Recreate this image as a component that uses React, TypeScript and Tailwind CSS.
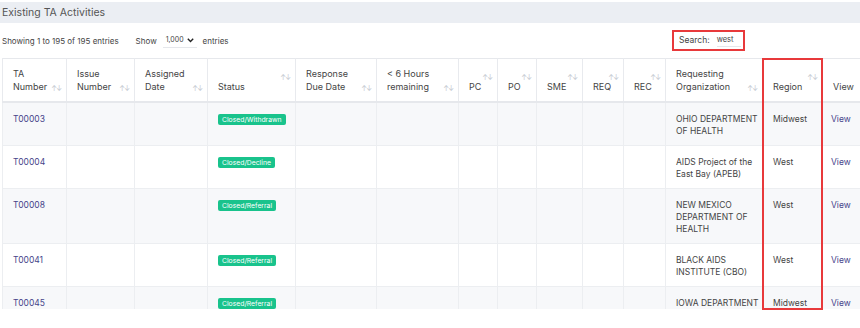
import React from 'react';

type Row = {
    id: string;
    status: string;
    org: string[];
    region: string;
    shade: boolean;
};

const rows: Row[] = [
    { id: 'T00003', status: 'Closed/Withdrawn', org: ['OHIO DEPARTMENT', 'OF HEALTH'], region: 'Midwest', shade: true },
    { id: 'T00004', status: 'Closed/Decline', org: ['AIDS Project of the', 'East Bay (APEB)'], region: 'West', shade: false },
    { id: 'T00008', status: 'Closed/Referral', org: ['NEW MEXICO', 'DEPARTMENT OF', 'HEALTH'], region: 'West', shade: true },
    { id: 'T00041', status: 'Closed/Referral', org: ['BLACK AIDS', 'INSTITUTE (CBO)'], region: 'West', shade: false },
    { id: 'T00045', status: 'Closed/Referral', org: ['IOWA DEPARTMENT'], region: 'Midwest', shade: true },
];

// widths in px, table starts at x=2
const columns: { label: string[]; width: number; sort?: 'low' | 'high' }[] = [
    { label: ['TA', 'Number'], width: 64, sort: 'low' },
    { label: ['Issue', 'Number'], width: 68, sort: 'low' },
    { label: ['Assigned', 'Date'], width: 73, sort: 'low' },
    { label: ['Status'], width: 88, sort: 'high' },
    { label: ['Response', 'Due Date'], width: 81, sort: 'low' },
    { label: ['< 6 Hours', 'remaining'], width: 82, sort: 'low' },
    { label: ['PC'], width: 39, sort: 'high' },
    { label: ['PO'], width: 39, sort: 'high' },
    { label: ['SME'], width: 46, sort: 'high' },
    { label: ['REQ'], width: 41, sort: 'high' },
    { label: ['REC'], width: 42, sort: 'high' },
    { label: ['Requesting', 'Organization'], width: 97, sort: 'low' },
    { label: ['Region'], width: 60, sort: 'high' },
    { label: ['View'], width: 60 },
];

const SortIcon: React.FC<{ pos: 'low' | 'high' }> = ({ pos }) => (
    <span
        className={`absolute right-[5px] text-[7px] leading-none tracking-[-1px] text-[#c3c7cf] ${pos === 'low' ? 'bottom-[9px]' : 'top-[15px]'}`}
    >
        ↑↓
    </span>
);

const Badge: React.FC<{ text: string }> = ({ text }) => (
    <span className="inline-block rounded-[2px] bg-[#19c38c] px-[4px] text-[6.8px] leading-[11px] text-white">
        {text}
    </span>
);

export default function App() {
    return (
        <div className="relative h-[328px] w-[860px] overflow-hidden bg-white text-[#444] [font-family:Inter,'Noto_Sans',sans-serif]">
            {/* Encabezado */}
            <div className="mt-[2px] flex h-[21px] items-center bg-[#ebeef3] px-[2px] text-[10.5px] text-[#555]">
                Existing TA Activities
            </div>

            {/* Controles */}
            <div className="flex h-[35px] items-center pl-[2px] text-[8px]">
                <span>Showing 1 to 195 of 195 entries</span>
                <span className="ml-[17px]">Show</span>
                <span className="ml-[6px] flex items-center gap-[3px] border-b border-[#e5e7eb] px-[3px] pb-[2px] pt-[2px] text-[7px]">
                    1,000
                    <svg width="7" height="5" viewBox="0 0 7 5">
                        <path d="M0.8 0.8 L3.5 3.6 L6.2 0.8" fill="none" stroke="#222" strokeWidth="1.4" />
                    </svg>
                </span>
                <span className="ml-[6px]">entries</span>

                <div className="ml-auto mr-[115px] flex h-[21px] w-[73px] items-center border-2 border-[#e8393b] pl-[5px]">
                    <span className="text-[8.5px]">Search:</span>
                    <span className="ml-[7px] border-b border-[#e5e7eb] pr-[8px] text-[7.5px]">west</span>
                </div>
            </div>

            {/* Tabla */}
            <div className="ml-[2px] h-[251px] overflow-hidden">
                <table className="w-[880px] table-fixed border-collapse text-[8.5px]">
                    <colgroup>
                        {columns.map((c, i) => (
                            <col key={i} style={{ width: c.width }} />
                        ))}
                    </colgroup>
                    <thead>
                        <tr className="h-[43px] border-b-2 border-t border-[#e6e8ec]">
                            {columns.map((c, i) => (
                                <th
                                    key={i}
                                    className="relative border-x border-[#e8eaee] pb-[8px] pl-[10px] text-left align-bottom text-[9px] font-normal leading-[13px] text-[#444]"
                                >
                                    {c.label.map((l, j) => (
                                        <div key={j}>{l}</div>
                                    ))}
                                    {c.sort && <SortIcon pos={c.sort} />}
                                </th>
                            ))}
                        </tr>
                    </thead>
                    <tbody>
                        {rows.map((r) => (
                            <tr key={r.id} className={`border-b border-[#eceef1] ${r.shade ? 'bg-[#f7f8fa]' : 'bg-white'}`}>
                                <td className="border-x border-[#eceef1] pb-[8px] pl-[10px] pt-[10px] align-top leading-[12px] text-[#46448a]">
                                    {r.id}
                                </td>
                                <td className="border-x border-[#eceef1]" />
                                <td className="border-x border-[#eceef1]" />
                                <td className="border-x border-[#eceef1] pb-[8px] pl-[10px] pt-[10px] align-top leading-[12px]">
                                    <Badge text={r.status} />
                                </td>
                                <td className="border-x border-[#eceef1]" />
                                <td className="border-x border-[#eceef1]" />
                                <td className="border-x border-[#eceef1]" />
                                <td className="border-x border-[#eceef1]" />
                                <td className="border-x border-[#eceef1]" />
                                <td className="border-x border-[#eceef1]" />
                                <td className="border-x border-[#eceef1]" />
                                <td className="border-x border-[#eceef1] pb-[8px] pl-[10px] pt-[10px] align-top leading-[12px]">
                                    {r.org.map((l, j) => (
                                        <div key={j}>{l}</div>
                                    ))}
                                </td>
                                <td className="border-x border-[#eceef1] pb-[8px] pl-[10px] pt-[10px] align-top leading-[12px]">
                                    {r.region}
                                </td>
                                <td className="border-x border-[#eceef1] pb-[8px] pl-[8px] pt-[10px] align-top leading-[12px] text-[#46448a]">
                                    View
                                </td>
                            </tr>
                        ))}
                    </tbody>
                </table>
            </div>

            {/* Resaltado de la columna Region */}
            <div className="pointer-events-none absolute left-[762px] top-[58px] h-[252px] w-[61px] border-2 border-[#e8393b]" />
        </div>
    );
}
